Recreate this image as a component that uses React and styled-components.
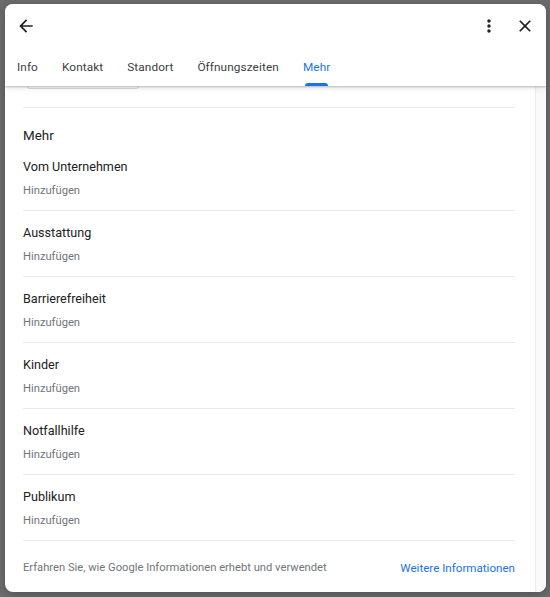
import React from "react";
import styled, { createGlobalStyle } from "styled-components";

const Global = createGlobalStyle`
  html, body { margin: 0; padding: 0; }
  body {
    background: #6c6c6c;
    font-family: Roboto, "Noto Sans", Arial, sans-serif;
    -webkit-font-smoothing: antialiased;
  }
`;

const Page = styled.div`
  width: 550px;
  height: 597px;
  padding: 4px 4px 5px 5px;
  box-sizing: border-box;
  display: flex;
`;

const Dialog = styled.div`
  flex: 1;
  background: #fff;
  border-radius: 8px;
  display: flex;
  flex-direction: column;
  overflow: hidden;
  box-shadow: 0 2px 10px rgba(0, 0, 0, 0.25);
`;

const Header = styled.header`
  position: relative;
  z-index: 1;
  background: #fff;
  box-shadow: 0 1px 2px rgba(60, 64, 67, 0.3), 0 2px 6px rgba(60, 64, 67, 0.12);
`;

const TopBar = styled.div`
  height: 44px;
  padding: 0 11px;
  display: flex;
  align-items: center;
  justify-content: space-between;
`;

const IconGroup = styled.div`
  display: flex;
  align-items: center;
  gap: 16px;
`;

const IconButton = styled.button`
  width: 20px;
  height: 20px;
  padding: 0;
  border: 0;
  background: none;
  color: #202124;
  display: flex;
  align-items: center;
  justify-content: center;
  svg { width: 20px; height: 20px; fill: currentColor; display: block; }
`;

const Tabs = styled.nav`
  height: 38px;
  display: flex;
  padding-left: 12px;
  gap: 24px;
`;

const Tab = styled.div`
  position: relative;
  display: flex;
  align-items: center;
  font-size: 11.8px;
  letter-spacing: 0.1px;
  color: ${(p) => (p.$active ? "#1a73e8" : "#3c4043")};
  &::after {
    content: "";
    display: ${(p) => (p.$active ? "block" : "none")};
    position: absolute;
    left: 2px;
    right: 2px;
    bottom: 0;
    height: 3px;
    border-radius: 3px 3px 0 0;
    background: #1a73e8;
  }
`;

const Body = styled.div`
  flex: 1;
  display: flex;
  min-height: 0;
`;

const Content = styled.div`
  flex: 1;
  padding: 0 20px 0 18px;
  display: flex;
  flex-direction: column;
`;

const ScrollTrack = styled.div`
  width: 10px;
  background: #fafafa;
  border-left: 1px solid #ececec;
`;

const ChipPeek = styled.div`
  margin: 0 376px 0 4px;
  height: 2px;
  border: 1px solid #dadce0;
  border-top: 0;
  border-radius: 0 0 14px 14px;
`;

const Divider = styled.div`
  height: 1px;
  background: #e8eaed;
  margin-top: ${(p) => p.$top || 0}px;
`;

const Heading = styled.h2`
  margin: 18px 0 0;
  font-size: 13.4px;
  line-height: 19px;
  font-weight: 400;
  color: #202124;
`;

const Item = styled.div`
  padding: 12px 0 11px;
  border-bottom: 1px solid #e8eaed;
  display: flex;
  flex-direction: column;
  gap: 6px;
`;

const ItemTitle = styled.div`
  font-size: 12.6px;
  line-height: 20px;
  color: #202124;
`;

const ItemSub = styled.div`
  font-size: 11.2px;
  line-height: 16px;
  color: #70757a;
`;

const Footer = styled.div`
  padding: 19px 0 15px;
  display: flex;
  justify-content: space-between;
  align-items: center;
  font-size: 11.2px;
  line-height: 16px;
`;

const FooterText = styled.span`
  color: #70757a;
`;

const FooterLink = styled.a`
  color: #1a73e8;
  font-size: 11.6px;
  text-decoration: none;
`;

const ArrowBack = () => (
  <svg viewBox="0 0 24 24"><path d="M20 11H7.83l5.59-5.59L12 4l-8 8 8 8 1.41-1.41L7.83 13H20v-2z" /></svg>
);
const MoreVert = () => (
  <svg viewBox="0 0 24 24"><path d="M12 8c1.1 0 2-.9 2-2s-.9-2-2-2-2 .9-2 2 .9 2 2 2zm0 2c-1.1 0-2 .9-2 2s.9 2 2 2 2-.9 2-2-.9-2-2-2zm0 6c-1.1 0-2 .9-2 2s.9 2 2 2 2-.9 2-2-.9-2-2-2z" /></svg>
);
const Close = () => (
  <svg viewBox="0 0 24 24"><path d="M19 6.41 17.59 5 12 10.59 6.41 5 5 6.41 10.59 12 5 17.59 6.41 19 12 13.41 17.59 19 19 17.59 13.41 12z" /></svg>
);

const tabs = ["Info", "Kontakt", "Standort", "Öffnungszeiten", "Mehr"];
const items = ["Vom Unternehmen", "Ausstattung", "Barrierefreiheit", "Kinder", "Notfallhilfe", "Publikum"];

export default function App() {
  return (
    <>
      <Global />
      <Page>
        <Dialog>
          <Header>
            <TopBar>
              <IconButton aria-label="Zurück"><ArrowBack /></IconButton>
              <IconGroup>
                <IconButton aria-label="Mehr Optionen"><MoreVert /></IconButton>
                <IconButton aria-label="Schließen"><Close /></IconButton>
              </IconGroup>
            </TopBar>
            <Tabs>
              {tabs.map((t) => (
                <Tab key={t} $active={t === "Mehr"}>{t}</Tab>
              ))}
            </Tabs>
          </Header>
          <Body>
            <Content>
              <ChipPeek />
              <Divider $top={18} />
              <Heading>Mehr</Heading>
              {items.map((it) => (
                <Item key={it}>
                  <ItemTitle>{it}</ItemTitle>
                  <ItemSub>Hinzufügen</ItemSub>
                </Item>
              ))}
              <Footer>
                <FooterText>Erfahren Sie, wie Google Informationen erhebt und verwendet</FooterText>
                <FooterLink href="#">Weitere Informationen</FooterLink>
              </Footer>
            </Content>
            <ScrollTrack />
          </Body>
        </Dialog>
      </Page>
    </>
  );
}
